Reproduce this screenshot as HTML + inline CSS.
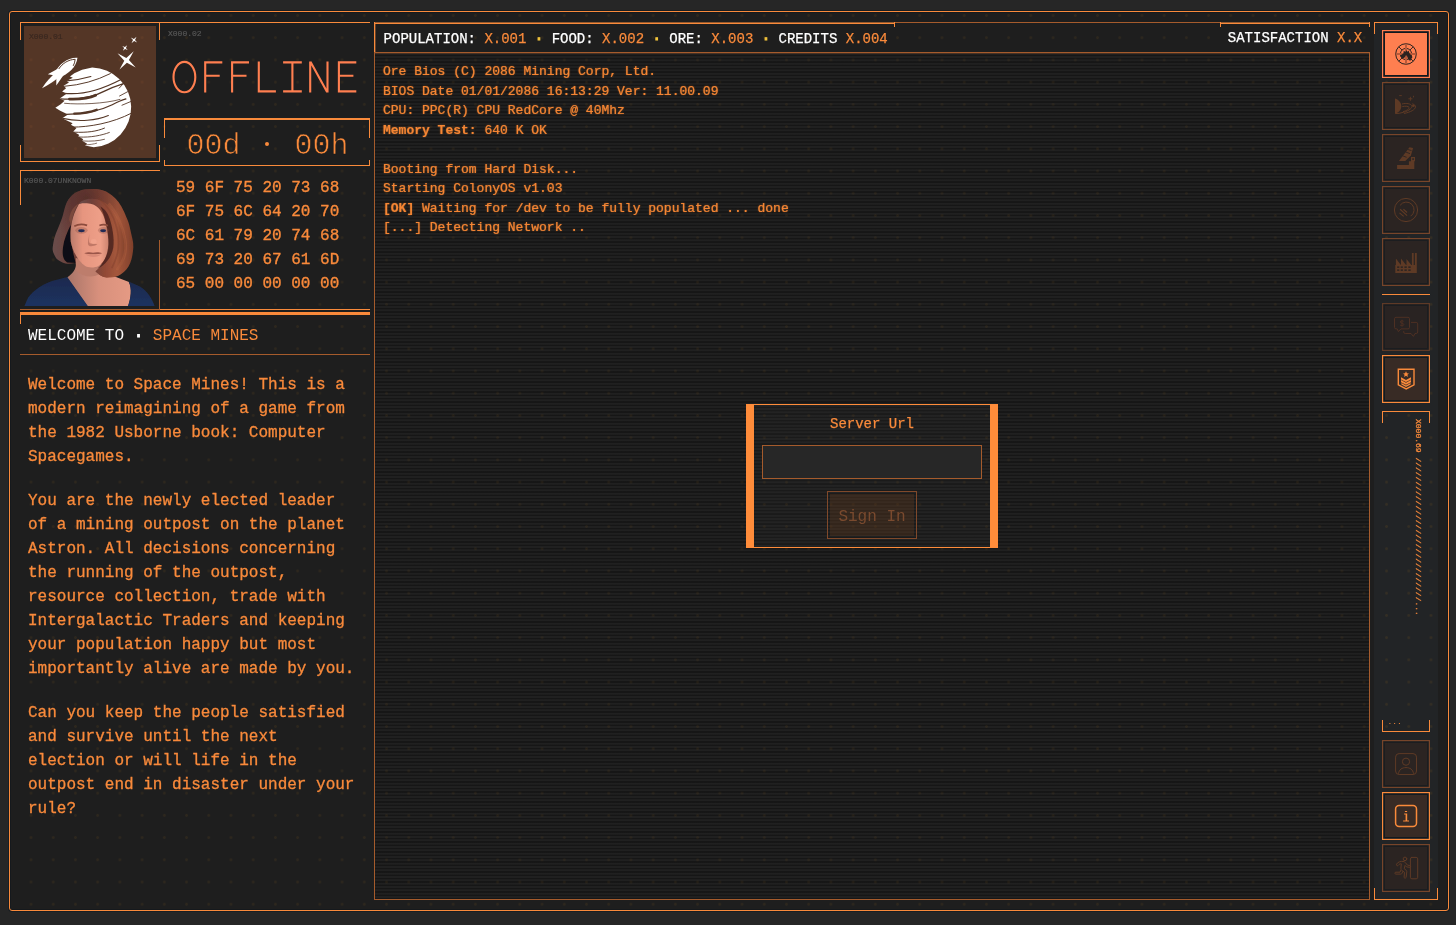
<!DOCTYPE html>
<html>
<head>
<meta charset="utf-8">
<title>Space Mines</title>
<style>
*{box-sizing:border-box;margin:0;padding:0}
html,body{width:1456px;height:925px;overflow:hidden;background:#262626}
body{font-family:"Liberation Mono",monospace;color:#f98a3b;position:relative}
.abs{position:absolute}
#frame{position:absolute;left:9px;top:11px;width:1440px;height:900px;border:1px solid #f98a3b;border-radius:3px;background-color:#1e1e1e;box-shadow:0 0 0 1px rgba(14,22,30,.55), inset 0 0 0 1px rgba(14,22,30,.55);
background-image:radial-gradient(circle at center, rgba(120,85,30,.17) 0, rgba(120,85,30,.17) 1px, rgba(120,85,30,0) 1.8px);
background-size:22.222px 22.222px;background-position:9.9px 14.6px}
/* all children positioned in page coordinates: offset by frame pos+border */
#page{position:absolute;left:-10px;top:-12px;width:1456px;height:925px;will-change:transform}
.ln{position:absolute;background:#f98a3b}
.dim{background:#a55b2c}
.w{color:#fff}
.t{position:absolute;white-space:pre;line-height:1}
.lbl{position:absolute;font-size:8px;line-height:8px;color:#555;-webkit-text-stroke:.2px;white-space:pre;letter-spacing:0}
.hex{font-size:16px;-webkit-text-stroke:0.35px #f98a3b}
#intro{-webkit-text-stroke:0.3px #f98a3b}
#intro p{margin:0 0 20px 0;white-space:pre}
.hd{font-size:14px;-webkit-text-stroke:0.25px}
#term{background:radial-gradient(circle at center, rgba(120,85,30,.14) 0, rgba(120,85,30,.14) 1px, rgba(120,85,30,0) 1.8px) .44px -4.17px/22.222px 22.222px,repeating-linear-gradient(to bottom,#202020 0,#202020 1.4px,#161616 1.9px,#161616 2.9px,#202020 3.333px)}
#bios{font-size:13px;line-height:19.5px;white-space:pre;color:#f58634;-webkit-text-stroke:.22px #f58634;text-shadow:0 0 2px rgba(245,134,52,.5)}#bios b{-webkit-text-stroke:.1px #f58634}
#dlg{border-top:1px solid #ff8c3a;border-bottom:1px solid #ff8c3a;border-left:8px solid #ff8c3a;border-right:8px solid #ff8c3a;background:radial-gradient(circle at center, rgba(120,85,30,.14) 0, rgba(120,85,30,.14) 1px, rgba(120,85,30,0) 1.8px) -.8px -.6px/22.222px 22.222px,repeating-linear-gradient(to bottom,#232323 0,#232323 1.4px,#1a1a1a 1.9px,#1a1a1a 2.9px,#232323 3.333px)}
.btn{position:absolute;left:1382px;color:#5e3a25}
.dimmer{color:#4e3023}
.hl{color:#f98a3b}
.dot{color:#f3c43c;-webkit-text-stroke:1.1px #f3c43c}
</style>
</head>
<body>
<div id="frame"><div id="page">

<!-- LEFT PANEL -->
<div id="left">
<!-- top line -->
<div class="ln" style="left:20px;top:22px;width:350px;height:1px"></div>
<!-- logo frame brackets -->
<div class="ln" style="left:20px;top:22px;width:1px;height:18px"></div>
<div class="ln" style="left:159px;top:22px;width:1px;height:18px"></div>
<div class="ln" style="left:20px;top:145px;width:1px;height:17px"></div>
<div class="ln" style="left:159px;top:145px;width:1px;height:17px"></div>
<div class="ln" style="left:20px;top:161px;width:140px;height:1px"></div>
<div class="abs" style="left:24px;top:26px;width:132px;height:132px;background-color:#543626;background-image:radial-gradient(circle at center, rgba(150,85,45,.16) 0, rgba(150,85,45,.16) 1px, rgba(150,85,45,0) 1.8px);background-size:22.222px 22.222px;background-position:-4.1px 0.5px"></div>
<div class="lbl" style="left:29px;top:32.5px;color:#3a2820">X000.01</div>
<svg class="abs" id="logo" style="left:24px;top:26px" width="132" height="132" viewBox="24 26 132 132"><g fill="#fff"><g transform="translate(59.100 73.300) rotate(-40.500)"><path d="M24 .2C17.500-6.400 6-7-3-3.200V3.200C6 7 17.500 6.400 24 .2z"/><path d="M3-4L-9.200-6.600-4.500-1zM3 4L-10 7.400-4.500 1z"/><path d="M-2-2.600C-9-2.800-16-1.500-22.600 .2-16 1.800-9 3-2 2.800z"/><path d="M2.500-3.500C9-5.400 16-4.400 21.300-.2 19.500 1.600 17.500 2.800 15.500 3.500" fill="none" stroke="#543626" stroke-width=".9"/></g><path d="M133.7 51.3L128.9 60.1L135.7 67.5L126.9 62.7L119.5 69.5L124.3 60.7L117.5 53.3L126.3 58.1z"/><path d="M127.1 45.3L125.9 47.9L127.7 50.1L125.1 48.9L122.9 50.7L124.1 48.1L122.3 45.9L124.9 47.1z"/><path d="M136.5 36.8L135.0 39.9L137.2 42.5L134.1 41.0L131.5 43.2L133.0 40.1L130.8 37.5L133.9 39.0z"/></g><g transform="translate(50 60) scale(.09728)"><path d="M434 76 L330 100 L250 135 L205 170 L235 182 L170 215 L195 232 L140 265 L165 290 L125 325 L170 347 L100 395 L150 420 L110 455 L55 490 L105 522 L185 560 L125 600 L232 650 L215 665 L272 700 L240 735 L302 770 L290 785 L342 815 L330 830 L382 860 L360 880 L450 897 A411 411 0 0 0 434 76z" fill="#fff"/><g fill="none" stroke="#543626" stroke-linecap="round"><path d="M170 215Q300 205 420 170" stroke-width="12"/><path d="M150 270Q400 250 620 140" stroke-width="10"/><path d="M130 340C300 365 520 310 730 200" stroke-width="13"/><path d="M110 400C300 410 450 380 560 320S720 260 760 240" stroke-width="13"/><path d="M200 402C300 405 400 395 470 362" stroke-width="28"/><path d="M715 370L800 325" stroke-width="9"/><path d="M710 290L750 248" stroke-width="9"/><path d="M150 445C300 460 560 450 720 405" stroke-width="8"/><path d="M170 560C350 555 520 520 640 460S760 410 780 400" stroke-width="13"/><path d="M250 552C350 548 420 535 480 512" stroke-width="24"/><path d="M740 465L835 425" stroke-width="9"/><path d="M130 600C300 640 480 620 600 570" stroke-width="11"/><path d="M230 690C400 690 640 650 840 545" stroke-width="10"/><path d="M250 742C380 748 480 735 560 700" stroke-width="10"/><path d="M300 792C420 798 530 775 610 745" stroke-width="9"/><path d="M330 832C420 838 500 832 560 815" stroke-width="8"/><path d="M360 872C400 872 450 865 480 855" stroke-width="7"/></g></g></svg>
<div class="lbl" style="left:168px;top:29.7px">X000.02</div>
<!-- OFFLINE -->
<svg class="abs" style="left:165px;top:55px" width="200" height="45" viewBox="165 55 200 45" fill="none" stroke="#ff7f50" stroke-width="2.1" stroke-linecap="butt" stroke-linejoin="miter">
<ellipse cx="184.4" cy="77.1" rx="10.9" ry="15.2"/>
<path d="M205.2 92.5V62.4H222.3M205.2 75.8H219.7"/>
<path d="M232.1 92.5V62.4H249M232.1 75.8H246.5"/>
<path d="M258.8 61.4V91.4H275.9"/>
<path d="M283.1 62.4H301.8M283.1 91.4H301.8M292.4 62.4V91.4"/>
<path d="M310.2 92.5V61.4M327.5 92.5V61.4M310.6 62L327.1 91.9"/>
<path d="M356.3 62.4H338.9V91.4H356.3M338.9 75.8H353.4"/>
</svg>
<!-- timer box -->
<div class="ln" style="left:164px;top:118px;width:206px;height:2px"></div>
<div class="ln" style="left:164px;top:118px;width:1px;height:20px"></div>
<div class="ln" style="left:369px;top:118px;width:1px;height:20px"></div>
<div class="ln" style="left:164px;top:160px;width:1px;height:6px"></div>
<div class="ln" style="left:369px;top:160px;width:1px;height:6px"></div>
<div class="ln" style="left:164px;top:165px;width:206px;height:1px"></div>
<div class="t" id="timer" style="left:186.4px;top:131px;font-size:30px;-webkit-text-stroke:0.7px #1e1e1e">00d   00h</div><div class="abs" style="left:264.6px;top:141.5px;width:4.2px;height:4.2px;border-radius:50%;background:#f98a3b"></div>
<!-- hex -->
<div class="t hex" style="left:176px;top:180px">59 6F 75 20 73 68</div>
<div class="t hex" style="left:176px;top:204px">6F 75 6C 64 20 70</div>
<div class="t hex" style="left:176px;top:228px">6C 61 79 20 74 68</div>
<div class="t hex" style="left:176px;top:252px">69 73 20 67 61 6D</div>
<div class="t hex" style="left:176px;top:276px">65 00 00 00 00 00</div>
<!-- portrait frame -->
<div class="ln" style="left:20px;top:170px;width:140px;height:1px"></div>
<div class="ln" style="left:20px;top:170px;width:1px;height:35px"></div>
<div class="ln dim" style="left:159px;top:240px;width:1px;height:70px"></div>
<div class="ln dim" style="left:20px;top:309px;width:140px;height:1px"></div>
<div class="ln" style="left:160px;top:309px;width:210px;height:1px"></div>
<div class="lbl" style="left:24px;top:176.900px">K000.07UNKNOWN</div>
<svg class="abs" id="portrait" style="left:24px;top:186px" width="134" height="120" viewBox="24 186 134 120"><defs>
<linearGradient id="hg" x1="0" x2="1" y1="0" y2="0"><stop offset="0" stop-color="#6a4e4c"/><stop offset=".25" stop-color="#6e3f39"/><stop offset=".55" stop-color="#914936"/><stop offset=".8" stop-color="#a4573b"/><stop offset="1" stop-color="#80402b"/></linearGradient>
<linearGradient id="fg" x1="0" x2="1" y1="0" y2="0"><stop offset="0" stop-color="#b97a6a"/><stop offset=".3" stop-color="#e6957f"/><stop offset=".75" stop-color="#ee9f88"/><stop offset="1" stop-color="#c47c68"/></linearGradient>
<linearGradient id="ng" x1="0" x2="1" y1="0" y2="0"><stop offset="0" stop-color="#a87468"/><stop offset=".5" stop-color="#d8907c"/><stop offset="1" stop-color="#e59a84"/></linearGradient>
<linearGradient id="sg" x1="0" x2="0" y1="0" y2="1"><stop offset="0" stop-color="#1a2a4e"/><stop offset="1" stop-color="#1d3260"/></linearGradient>
<radialGradient id="tg" cx=".42" cy=".1" r=".5"><stop offset="0" stop-color="#4a2a28" stop-opacity=".75"/><stop offset="1" stop-color="#4a2a28" stop-opacity="0"/></radialGradient>
<filter id="bl" x="-5%" y="-5%" width="110%" height="110%"><feGaussianBlur stdDeviation=".5"/></filter>
<clipPath id="pc"><rect x="24" y="186" width="134" height="120"/></clipPath>
</defs>
<g clip-path="url(#pc)"><g filter="url(#bl)">
<!-- neck/chest -->
<path d="M67 277.500C72 274 76 271 77 260H104C104 270 108 275 116 277L129 282C132 288 131 298 128 307H88z" fill="url(#ng)"/>
<g transform="translate(45 186) scale(.1027)">
<!-- hair back -->
<path d="M450 30C540 25 600 50 650 90S740 180 770 250 820 360 830 420 865 540 860 600 850 700 830 750 780 830 740 860 650 895 600 890 520 860 490 830L290 750C250 760 200 760 170 745S110 715 100 690 70 640 75 600 85 520 100 480 150 360 170 300 195 180 230 130 290 65 330 50 400 32 450 30z" fill="url(#hg)"/>
<path d="M450 30C540 25 600 50 650 90S740 180 770 250 820 360 830 420 865 540 860 600 850 700 830 750 780 830 740 860 650 895 600 890 520 860 490 830L290 750C250 760 200 760 170 745S110 715 100 690 70 640 75 600 85 520 100 480 150 360 170 300 195 180 230 130 290 65 330 50 400 32 450 30z" fill="url(#tg)"/>
<!-- dark interior left lock -->
<path d="M250 380C215 450 185 520 175 600S180 720 215 745L300 750C270 650 245 520 250 380z" fill="#0f0d12"/>
<!-- neck shadow under chin -->
<path d="M300 700L560 760 540 850C470 900 370 890 300 820z" fill="#bd7d6c"/>
<!-- face -->
<path d="M330 175C400 150 500 155 560 190 600 280 625 400 640 520 630 640 590 730 520 780 480 800 420 800 385 775 320 720 270 640 250 540 240 440 255 300 330 175z" fill="url(#fg)"/>
<!-- right hair lock over face -->
<path d="M330 170C380 120 480 110 560 150S700 280 750 400 800 620 760 740 640 890 600 890 520 860 490 830C545 790 590 720 612 640S618 480 600 400 570 270 520 215 400 165 330 170z" fill="url(#hg)"/>
<path d="M540 200C580 280 608 400 616 520S585 740 510 805C590 775 650 690 665 600S650 380 630 320 590 235 540 200z" fill="#3a1a18" opacity=".7"/>
<path d="M620 170C700 260 760 400 780 520S770 720 700 820" fill="none" stroke="#c06a46" stroke-width="28" opacity=".3"/>
<path d="M520 120C620 190 690 330 710 470S700 700 650 800" fill="none" stroke="#7a3c2a" stroke-width="16" opacity=".4"/>
<!-- hairline left -->
<path d="M330 172C290 220 265 300 255 380L235 330C240 260 275 195 330 172z" fill="#7a483c"/>
<!-- eyes -->
<g fill="#8d5448" opacity=".35"><ellipse cx="355" cy="432" rx="60" ry="32"/><ellipse cx="568" cy="432" rx="52" ry="32"/></g>
<g fill="#222b52"><ellipse cx="355" cy="436" rx="31" ry="14"/><ellipse cx="566" cy="436" rx="29" ry="14"/></g>
<path d="M285 392C320 372 365 368 410 384M530 384C560 372 590 374 612 388" stroke="#8c4c3c" stroke-width="17" fill="none"/>
<!-- nose -->
<path d="M430 470C425 520 415 545 420 570S470 590 510 570C490 560 470 565 445 560S432 520 430 470z" fill="#b26c5c" opacity=".75"/>
<ellipse cx="475" cy="540" rx="28" ry="24" fill="#f4a790" opacity=".7"/>
<!-- mouth -->
<path d="M382 655C420 640 450 646 468 650 490 644 530 642 556 655 520 668 420 668 382 655z" fill="#9a5448"/>
<path d="M395 664C440 672 510 672 545 664 520 700 430 700 395 664z" fill="#d98a78"/>
</g>
<!-- shirt -->
<path d="M24 307L27 300C30 293 40 285 52 281L67.300 277 88.500 307z" fill="url(#sg)"/>
<path d="M127.500 307C131 298 132.500 289 128.500 281.500L140 286.500C147 291 152 298 155 307z" fill="url(#sg)"/>
</g></g></svg>
<!-- welcome header -->
<div class="ln" style="left:20px;top:312px;width:350px;height:3px"></div>
<div class="ln" style="left:20px;top:312px;width:1px;height:12px"></div>
<div class="t" style="left:28px;top:327.7px;font-size:16px"><span class="w">WELCOME TO <span style="-webkit-text-stroke:.9px #fff">·</span></span> SPACE MINES</div>
<div class="ln dim" style="left:20px;top:354px;width:350px;height:1px"></div>
<div id="intro" class="abs" style="left:28px;top:372.7px;font-size:16px;line-height:24px">
<p>Welcome to Space Mines! This is a
modern reimagining of a game from
the 1982 Usborne book: Computer
Spacegames.</p>
<p>You are the newly elected leader
of a mining outpost on the planet
Astron. All decisions concerning
the running of the outpost,
resource collection, trade with
Intergalactic Traders and keeping
your population happy but most
importantly alive are made by you.</p>
<p>Can you keep the people satisfied
and survive until the next
election or will life in the
outpost end in disaster under your
rule?</p>
</div>
</div>

<!-- MAIN PANEL -->
<div id="main">
<!-- terminal bg -->
<div class="abs" id="term" style="left:375px;top:53px;width:994px;height:846px"></div>
<!-- borders -->
<div class="ln" style="left:374px;top:22px;width:521px;height:1px;opacity:.55"></div><div class="ln" style="left:374px;top:23px;width:521px;height:1px"></div>
<div class="ln" style="left:894px;top:22px;width:1px;height:5px"></div>
<div class="ln dim" style="left:895px;top:22px;width:325px;height:1px"></div>
<div class="ln" style="left:1220px;top:22px;width:150px;height:1px;opacity:.55"></div><div class="ln" style="left:1220px;top:23px;width:150px;height:1px"></div>
<div class="ln" style="left:1220px;top:22px;width:1px;height:5px"></div>
<div class="ln" style="left:1369px;top:22px;width:1px;height:5px"></div>
<div class="ln" style="left:374px;top:22px;width:1px;height:31px"></div><div class="ln" style="left:375px;top:23px;width:1px;height:29px;opacity:.35"></div>
<div class="ln dim" style="left:374px;top:53px;width:1px;height:847px"></div>
<div class="ln dim" style="left:1369px;top:52px;width:1px;height:848px"></div>
<div class="ln dim" style="left:374px;top:899px;width:996px;height:1px"></div>
<div class="ln dim" style="left:374px;top:52px;width:996px;height:1px"></div><div class="ln dim" style="left:375px;top:53px;width:994px;height:1px;opacity:.3"></div>
<!-- header text -->
<div class="t hd" style="left:383.6px;top:32.3px"><span class="w">POPULATION:</span> X.001 <span class="dot">·</span> <span class="w">FOOD:</span> X.002 <span class="dot">·</span> <span class="w">ORE:</span> X.003 <span class="dot">·</span> <span class="w">CREDITS</span> X.004</div>
<div class="t hd" style="left:1227.8px;top:31px"><span class="w">SATISFACTION</span> X.X</div>
<!-- terminal text -->
<div id="bios" class="abs" style="left:383px;top:62px">Ore Bios (C) 2086 Mining Corp, Ltd.
BIOS Date 01/01/2086 16:13:29 Ver: 11.00.09
CPU: PPC(R) CPU RedCore @ 40Mhz
<b>Memory Test:</b> 640 K OK

Booting from Hard Disk...
Starting ColonyOS v1.03
<b>[OK]</b> Waiting for /dev to be fully populated ... done
[...] Detecting Network ..</div>
<!-- dialog -->
<div class="abs" id="dlg" style="left:746px;top:404px;width:252px;height:144px"></div>
<div class="t" style="left:830px;top:417.3px;font-size:14px;-webkit-text-stroke:0.25px #f98a3b">Server Url</div>
<div class="abs" style="left:762px;top:445px;width:220px;height:34px;border:1px solid #a55b2c;background:#272727"></div>
<div class="abs" style="left:827px;top:491px;width:90px;height:48px;border:1px solid #80492a;padding:2px"><div style="width:100%;height:100%;background:rgba(110,62,30,.3)"></div></div>
<div class="t" style="left:838.4px;top:509px;font-size:16px;color:#7a4a2e">Sign In</div>
</div>

<!-- SIDEBAR -->
<div id="side">
<div class="abs" style="left:1374px;top:22px;width:64px;height:878px;background:radial-gradient(circle at center, rgba(120,85,30,.2) 0, rgba(120,85,30,.2) 1px, rgba(120,85,30,0) 1.8px) 1.44px 4.61px/22.222px 22.222px,#222426"></div>
<div class="ln" style="left:1374px;top:22px;width:64px;height:1px"></div><div class="ln" style="left:1374px;top:22px;width:1px;height:12px"></div><div class="ln" style="left:1437px;top:22px;width:1px;height:12px"></div>
<div class="ln" style="left:1374px;top:899px;width:64px;height:1px"></div><div class="ln" style="left:1374px;top:888px;width:1px;height:12px"></div><div class="ln" style="left:1437px;top:888px;width:1px;height:12px"></div>
<svg class="btn act" style="top:30px" width="48" height="48" viewBox="0 0 48 48"><rect x="0" y="0" width="48" height="48" fill="#10181e"/><rect x=".6" y=".6" width="46.800" height="46.800" fill="none" stroke="#ff7f50" stroke-width="1.200"/><rect x="3" y="3" width="42" height="42" fill="#ff7f50"/><g transform="translate(12 12)"><g fill="none" stroke="#2b2320" stroke-width="1"><circle cx="12" cy="12" r="10.3"/><circle cx="12" cy="12" r="5.6"/><path d="M4.7 4.7L8 8M19.3 4.7L16 8M4.7 19.3L8 16M19.3 19.3L16 16" stroke-width=".9"/></g><path d="M12 1.8V22.2M1.8 12H22.2" stroke="#b85a3a" stroke-width="2" fill="none"/><path d="M9.700 8.500L11.300 10 12.500 8.200 13.700 9.700 14.600 8.500 15.500 11.300 18.500 14.900 16.100 19.100 14 17 13.100 14.300 12 13.100 10.700 15.500 8.200 16.700 6.100 13.700 9.400 11.600z" fill="#2b2320"/></g></svg>
<svg class="btn dimb" style="top:82px" width="48" height="48" viewBox="0 0 48 48"><rect x="0" y="0" width="48" height="48" fill="#1b1d20"/><rect x=".6" y=".6" width="46.800" height="46.800" fill="none" stroke="#77452a" stroke-width="1.200"/><rect x="3" y="3" width="42" height="42" fill="#2b2422"/><g transform="translate(12 12)"><path d="M1 4.6C5.2 6 7.3 9 7.3 12.3S5.2 18.6 1 20z" fill="currentColor"/><g fill="none" stroke="currentColor" stroke-width="1"><path d="M8 10c4.500-1.200 8.800-.2 9.800 1.600 1.100 2-2.400 5-8.300 6.700-3 .9-5.800 1.300-8 1.300"/><path d="M8.300 12.600c3.400-.8 6.300-.4 6.700.8.500 1.400-2.200 3.200-6 4.300"/><path d="M18.300 9.800c2 .6 3.200 1.800 3.200 3.100 0 2.500-4.800 5.300-11.600 6.600"/><path d="M16.400 2.800v4M14.400 4.800h4" stroke-width=".9"/><path d="M5.200 1.600h2.600M19.500 1.800v1.600" stroke-width=".9"/></g><circle cx="19.400" cy="11.700" r="1.300" fill="currentColor"/></g></svg>
<svg class="btn dimb" style="top:134px" width="48" height="48" viewBox="0 0 48 48"><rect x="0" y="0" width="48" height="48" fill="#1b1d20"/><rect x=".6" y=".6" width="46.800" height="46.800" fill="none" stroke="#77452a" stroke-width="1.200"/><rect x="3" y="3" width="42" height="42" fill="#2b2422"/><g transform="translate(12 12)"><path d="M15.500 1.300L19.100 2 16.900 9.400 11.300 14.900H4.900z" fill="currentColor"/><path d="M13.300 3.300l4.200 1.300M11.300 5.900l4.700 1.700M8.300 9.700l4.300 1.600" stroke="#2b2422" stroke-width=".9" fill="none"/><path d="M17 11h4v4.200h-.7V23.100H3.100V19.100H14.900V15.200H17z" fill="currentColor"/><rect x="18.300" y="12.300" width="1.600" height="1.600" fill="#2b2422"/></g></svg>
<svg class="btn dimb" style="top:186px" width="48" height="48" viewBox="0 0 48 48"><rect x="0" y="0" width="48" height="48" fill="#1b1d20"/><rect x=".6" y=".6" width="46.800" height="46.800" fill="none" stroke="#77452a" stroke-width="1.200"/><rect x="3" y="3" width="42" height="42" fill="#2b2422"/><g transform="translate(12 12)"><g fill="none" stroke="currentColor" stroke-width="1"><circle cx="12" cy="12" r="11.600"/><path d="M6.100 7.300A7.700 7.700 0 1 1 16.600 18.200"/><path d="M6.100 11.300l7 6.300M9.400 11.300l3.700 3.200M5.500 14.900l4.200 3.500" stroke-width="1.200"/></g></g></svg>
<svg class="btn dimb" style="top:238px" width="48" height="48" viewBox="0 0 48 48"><rect x="0" y="0" width="48" height="48" fill="#1b1d20"/><rect x=".6" y=".6" width="46.800" height="46.800" fill="none" stroke="#77452a" stroke-width="1.200"/><rect x="3" y="3" width="42" height="42" fill="#2b2422"/><g transform="translate(12 12)"><path d="M1.300 23V14.900h.6V8.500L6.900 14.900H7V8.500L12 14.900h.5V9.100L17.300 14.900h.6V3.100h1.800V14.900h1.200V3.100h1.900V23z" fill="currentColor"/><g fill="#2b2422"><rect x="3.100" y="16.400" width="2.200" height="1.500"/><rect x="6.700" y="16.400" width="2.200" height="1.500"/><rect x="10.400" y="16.400" width="2.400" height="1.500"/><rect x="14.300" y="16.400" width="2.400" height="1.500"/><rect x="3.100" y="19.400" width="2.200" height="1.500"/><rect x="6.700" y="19.400" width="2.200" height="1.500"/><rect x="10.400" y="19.400" width="2.400" height="1.500"/><rect x="14.300" y="19.400" width="2.400" height="1.500"/></g></g></svg>
<div class="ln" style="left:1382px;top:294px;width:48px;height:1.3px"></div>
<svg class="btn dimb dimmer" style="top:303px" width="48" height="48" viewBox="0 0 48 48"><rect x="0" y="0" width="48" height="48" fill="#1b1d20"/><rect x=".6" y=".6" width="46.800" height="46.800" fill="none" stroke="#5e3a27" stroke-width="1.200"/><rect x="3" y="3" width="42" height="42" fill="#292322"/><g transform="translate(12 12)"><g fill="none" stroke="currentColor" stroke-width="1" stroke-linejoin="round"><path d="M2 2.300H14a1.500 1.500 0 0 1 1.500 1.500V12.400A1.500 1.500 0 0 1 14 13.900H6.900L4.400 16.600 3.200 13.900H2A1.500 1.500 0 0 1 .5 12.400V3.800A1.500 1.500 0 0 1 2 2.300z"/><path d="M17 7.400h5.200a1.500 1.500 0 0 1 1.500 1.500v8.100a1.500 1.500 0 0 1-1.500 1.500H21l-1.600 2.900-2.400-2.900h-5.800a1.500 1.500 0 0 1-1.500-1.500V16.100"/><path d="M9.600 6.300c-.7-.8-3.300-.8-3.300.7 0 1.600 3.500 .8 3.500 2.500 0 1.500-2.800 1.500-3.700 .5M8 4.700v6.900" stroke-width=".9"/></g></g></svg>
<svg class="btn hl" style="top:355px" width="48" height="48" viewBox="0 0 48 48"><rect x="0" y="0" width="48" height="48" fill="#111a21"/><rect x=".6" y=".6" width="46.800" height="46.800" fill="none" stroke="#f98a3b" stroke-width="1.200"/><rect x="3" y="3" width="42" height="42" fill="#382b25"/><g transform="translate(12 12)"><path d="M4.300 2.300H20V17.900L12.200 21.900 4.300 17.900z" fill="none" stroke="currentColor" stroke-width="1.400"/><path d="M12 4.300l.9 1.900 2.100.2-1.600 1.400.5 2.100L12 8.800l-1.900 1.100.5-2.100L9 6.400l2.100-.2z" fill="currentColor"/><path d="M7 10.300l5 2.600 5-2.600v2.100l-5 2.600-5-2.600zM7 13.100l5 2.600 5-2.600v2.100l-5 2.600-5-2.600zM7.400 16.100l4.600 2.400 4.600-2.400v1.500L12 20l-4.600-2.400z" fill="currentColor"/></g></svg>
<div class="ln" style="left:1382px;top:411px;width:48px;height:1px"></div><div class="ln" style="left:1382px;top:411px;width:1px;height:12px"></div><div class="ln" style="left:1429px;top:411px;width:1px;height:12px"></div>
<div class="t" id="vtxt" style="-webkit-text-stroke:.3px #f98a3b;left:1421.5px;top:419.2px;font-size:8px;transform-origin:0 0;transform:rotate(90deg)">X000.69 //////////////////////////////...</div>
<div class="ln" style="left:1382px;top:731px;width:48px;height:1px"></div><div class="ln" style="left:1382px;top:720px;width:1px;height:12px"></div><div class="ln" style="left:1429px;top:720px;width:1px;height:12px"></div>
<div class="t" style="left:1387.5px;top:717.5px;font-size:8px">...</div>
<svg class="btn dimb" style="top:740px" width="48" height="48" viewBox="0 0 48 48"><rect x="0" y="0" width="48" height="48" fill="#1b1d20"/><rect x=".6" y=".6" width="46.800" height="46.800" fill="none" stroke="#77452a" stroke-width="1.200"/><rect x="3" y="3" width="42" height="42" fill="#2b2422"/><g transform="translate(12 12)"><g fill="none" stroke="currentColor" stroke-width="1"><rect x="1.600" y="1.600" width="20.900" height="20.900" rx="3.500"/><circle cx="12" cy="9.700" r="3.600"/><path d="M4.400 21.700C5.200 17.400 8 15.600 12 15.600s6.800 1.800 7.600 6.100"/></g></g></svg>
<svg class="btn hl" style="top:792px" width="48" height="48" viewBox="0 0 48 48"><rect x="0" y="0" width="48" height="48" fill="#111a21"/><rect x=".6" y=".6" width="46.800" height="46.800" fill="none" stroke="#f98a3b" stroke-width="1.200"/><rect x="3" y="3" width="42" height="42" fill="#382b25"/><g transform="translate(12 12)"><rect x="1.600" y="1.600" width="20.900" height="20.900" rx="3.500" fill="none" stroke="currentColor" stroke-width="1.500"/><path d="M10.900 6.900h2.200v1.100h-2.200zM10.100 9.500h3.100v6.900h1.800v1.100H9.100v-1.100h2.500V10.600h-1.500z" fill="currentColor"/></g></svg>
<svg class="btn dimb" style="top:844px" width="48" height="48" viewBox="0 0 48 48"><rect x="0" y="0" width="48" height="48" fill="#1b1d20"/><rect x=".6" y=".6" width="46.800" height="46.800" fill="none" stroke="#77452a" stroke-width="1.200"/><rect x="3" y="3" width="42" height="42" fill="#2b2422"/><g transform="translate(12 12)"><g fill="none" stroke="currentColor" stroke-width="1" stroke-linejoin="round" stroke-linecap="round"><rect x="16.400" y="1.400" width="7.300" height="21.400" rx="1.500"/><circle cx="11" cy="2.900" r="1.800"/><path d="M9.500 5.500C7 4.800 3.500 6 2.500 8.300c-.5 1.200 1 2 1.800 1 .9-1.200 2-1.700 3-1.500l-.4 4.400c-.1 1 .2 1.700 1 2.300l2.600 1.800-.4 4.800c-.1 1.400 1.800 1.500 2 .1l.7-5.400c.1-.7-.2-1.200-.8-1.700l-1.800-1.400.9-3.300 1.400 1.500 3 .4c1.300.2 1.500-1.600.2-1.800l-2.300-.4-2-2.500C10.900 6 10.300 5.700 9.500 5.500z"/><path d="M6.800 14.300l-.8 1.900-4.200 0c-1.300 0-1.300 1.900 0 1.900h5c.6 0 1-.3 1.200-.8l.7-1.600"/></g></g></svg>
</div>

</div></div>
</body>
</html>
